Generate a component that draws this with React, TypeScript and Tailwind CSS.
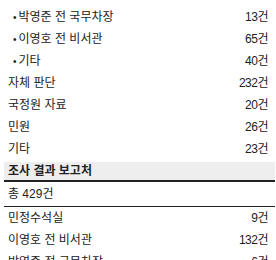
const font = { fontFamily: '"Liberation Sans", "Noto Sans CJK KR", sans-serif' };

type Row = { label: string; value: string; sub?: boolean };

const topRows: Row[] = [
  { label: '청와대 하명', value: '84건', sub: true },
  { label: '박영준 전 국무차장', value: '13건', sub: true },
  { label: '이영호 전 비서관', value: '65건', sub: true },
  { label: '기타', value: '40건', sub: true },
  { label: '자체 판단', value: '232건' },
  { label: '국정원 자료', value: '20건' },
  { label: '민원', value: '26건' },
  { label: '기타', value: '23건' },
];

const bottomRows: Row[] = [
  { label: '민정수석실', value: '9건' },
  { label: '이영호 전 비서관', value: '132건' },
  { label: '박영준 전 국무차장', value: '6건' },
];

function Line({ row }: { row: Row }) {
  return (
    <div className="flex h-[22px] items-center justify-between pl-[4px] pr-[7px]">
      <span className="flex items-center">
        {row.sub && <span className="ml-[5px] mr-[2px] text-[10px]">•</span>}
        {row.label}
      </span>
      <span className="tracking-[-0.5px]">{row.value}</span>
    </div>
  );
}

export default function App() {
  return (
    <div className="h-[260px] w-[276px] overflow-hidden bg-white text-[12px] text-[#222]" style={font}>
      <div className="-mt-[16px] pl-[4px] pr-[1px]">
        {topRows.map((r, i) => (
          <Line key={i} row={r} />
        ))}
        <div className="mt-[2px] flex h-[20px] items-center border-b-2 border-[#222] bg-[#eeeeee] pl-[4px] font-bold">
          조사 결과 보고처
        </div>
        <div className="flex h-[25px] items-center border-b border-[#222] pl-[4px]">총 429건</div>
        {bottomRows.map((r, i) => (
          <Line key={i} row={r} />
        ))}
      </div>
    </div>
  );
}
